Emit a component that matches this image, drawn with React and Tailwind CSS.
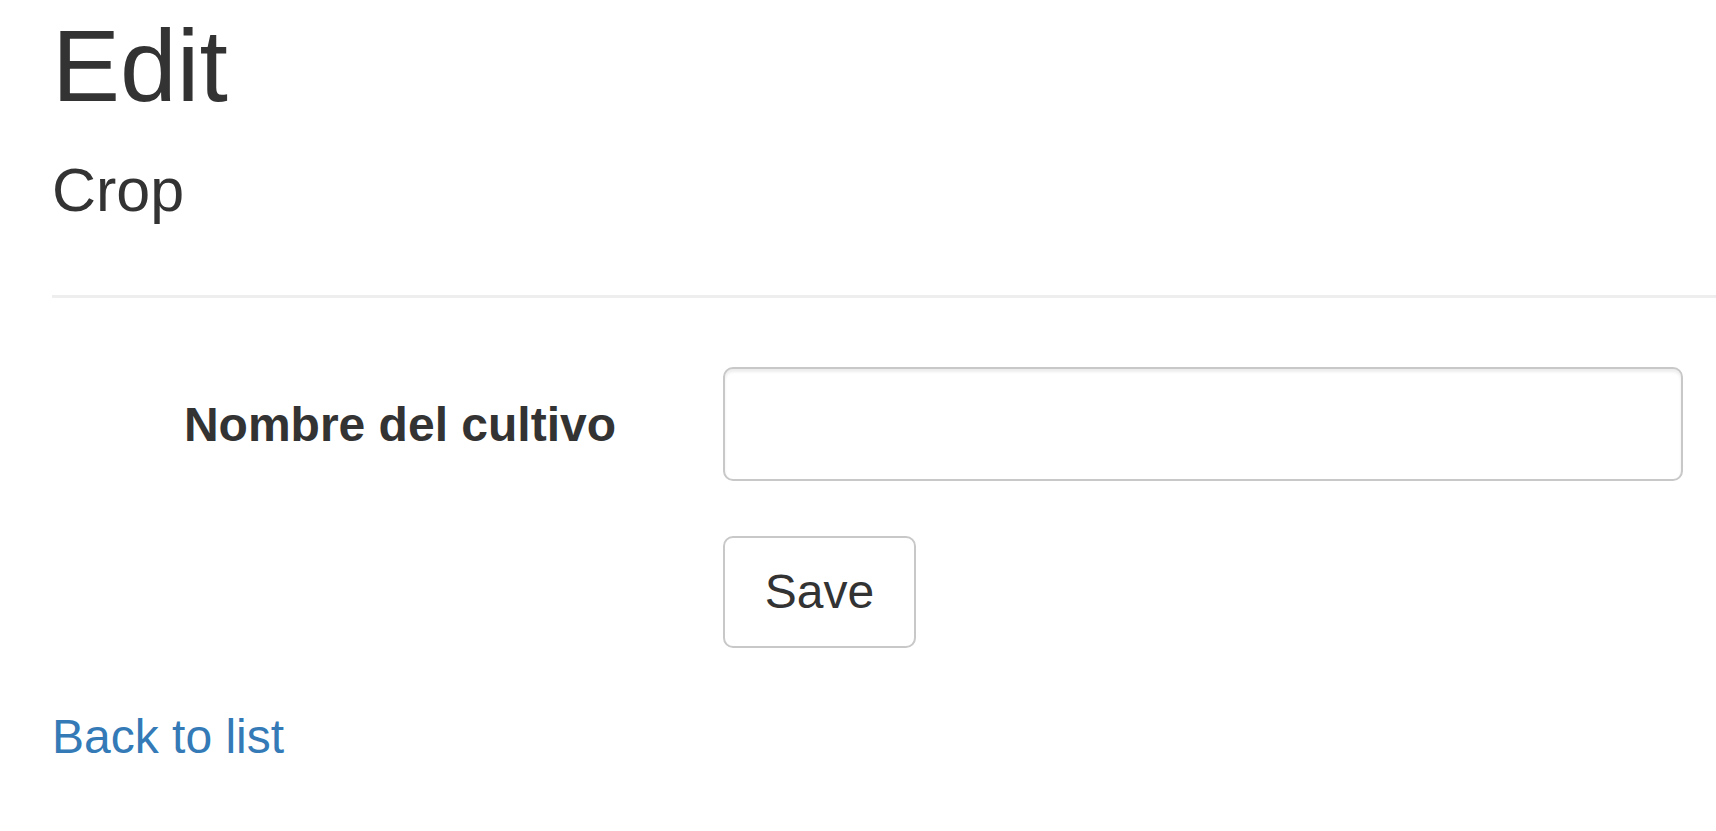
// App.jsx - Edit Crop page (Bootstrap look, scaled up)

import React from 'react';

const App = () => {
  return (
    <div className="min-h-screen bg-white text-[#333] font-['Liberation_Sans',Arial,sans-serif] pl-[52px] pt-[10px]">
      {/* Titles */}
      <h2 className="text-[102px] leading-[1.1] font-normal">Edit</h2>
      <h4 className="text-[61px] leading-[1.1] font-normal mt-[35px]">Crop</h4>

      <hr className="border-0 border-t-[3px] border-[#eee] mt-[71px]" />

      {/* Form */}
      <form className="mt-[69px]" onSubmit={(e) => e.preventDefault()}>
        <div className="flex items-start">
          <label className="w-[564px] text-right font-bold text-[48px] leading-[68px] pt-[24px]">
            Nombre del cultivo
          </label>
          <input
            type="text"
            className="ml-[107px] w-[960px] h-[114px] border-2 border-[#c8c8c8] rounded-[10px] bg-white shadow-[inset_0_3px_3px_rgba(0,0,0,0.075)] px-[42px] text-[48px] outline-none"
          />
        </div>

        <div className="flex mt-[55px]">
          <button
            type="submit"
            className="ml-[671px] w-[193px] h-[112px] border-2 border-[#c8c8c8] rounded-[10px] bg-white text-[48px] text-[#333]"
          >
            Save
          </button>
        </div>
      </form>

      <div className="mt-[55px]">
        <a href="#" className="text-[#337ab7] text-[48px] leading-[68px]">
          Back to list
        </a>
      </div>
    </div>
  );
};

export default App;
